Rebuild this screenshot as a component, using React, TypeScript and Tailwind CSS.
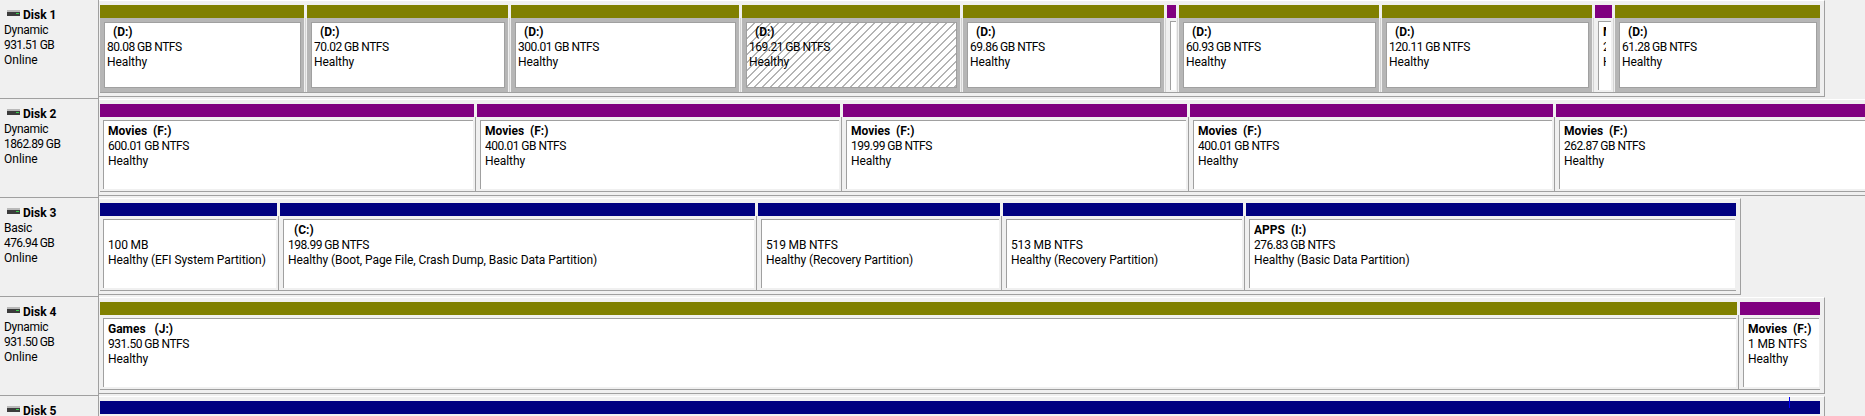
const OLIVE = "bg-[#808000]";
const PURPLE = "bg-[#800080]";
const NAVY = "bg-[#000080]";

type Part = {
  width: string;
  color: string;
  name?: string;
  size?: string;
  status?: string;
  selected?: boolean;
  hatched?: boolean;
};

type Disk = {
  title: string;
  kind?: string;
  capacity?: string;
  state?: string;
  boxWidth: string;
  parts: Part[];
};

const D = (width: string, size: string, hatched = false): Part => ({
  width,
  color: OLIVE,
  name: "  (D:)",
  size,
  status: "Healthy",
  selected: true,
  hatched,
});

const disks: Disk[] = [
  {
    title: "Disk 1",
    kind: "Dynamic",
    capacity: "931.51 GB",
    state: "Online",
    boxWidth: "w-[1726px]",
    parts: [
      D("w-[204px]", "80.08 GB NTFS"),
      D("w-[201px]", "70.02 GB NTFS"),
      D("w-[228px]", "300.01 GB NTFS"),
      D("w-[218px]", "169.21 GB NTFS", true),
      D("w-[201px]", "69.86 GB NTFS"),
      { width: "w-[9px]", color: PURPLE },
      D("w-[200px]", "60.93 GB NTFS"),
      D("w-[210px]", "120.11 GB NTFS"),
      { width: "w-[17px]", color: PURPLE, name: "Movies  (F:)", size: "2.00 GB NTFS", status: "Healthy" },
      D("w-[205px]", "61.28 GB NTFS"),
    ],
  },
  {
    title: "Disk 2",
    kind: "Dynamic",
    capacity: "1862.89 GB",
    state: "Online",
    boxWidth: "w-[1800px]",
    parts: [
      { width: "w-[374px]", color: PURPLE, name: "Movies  (F:)", size: "600.01 GB NTFS", status: "Healthy" },
      { width: "w-[363px]", color: PURPLE, name: "Movies  (F:)", size: "400.01 GB NTFS", status: "Healthy" },
      { width: "w-[344px]", color: PURPLE, name: "Movies  (F:)", size: "199.99 GB NTFS", status: "Healthy" },
      { width: "w-[363px]", color: PURPLE, name: "Movies  (F:)", size: "400.01 GB NTFS", status: "Healthy" },
      { width: "w-[360px]", color: PURPLE, name: "Movies  (F:)", size: "262.87 GB NTFS", status: "Healthy" },
    ],
  },
  {
    title: "Disk 3",
    kind: "Basic",
    capacity: "476.94 GB",
    state: "Online",
    boxWidth: "w-[1642px]",
    parts: [
      { width: "w-[177px]", color: NAVY, size: "100 MB", status: "Healthy (EFI System Partition)" },
      { width: "w-[475px]", color: NAVY, name: "  (C:)", size: "198.99 GB NTFS", status: "Healthy (Boot, Page File, Crash Dump, Basic Data Partition)" },
      { width: "w-[242px]", color: NAVY, size: "519 MB NTFS", status: "Healthy (Recovery Partition)" },
      { width: "w-[240px]", color: NAVY, size: "513 MB NTFS", status: "Healthy (Recovery Partition)" },
      { width: "w-[490px]", color: NAVY, name: "APPS  (I:)", size: "276.83 GB NTFS", status: "Healthy (Basic Data Partition)" },
    ],
  },
  {
    title: "Disk 4",
    kind: "Dynamic",
    capacity: "931.50 GB",
    state: "Online",
    boxWidth: "w-[1726px]",
    parts: [
      { width: "w-[1637px]", color: OLIVE, name: "Games   (J:)", size: "931.50 GB NTFS", status: "Healthy" },
      { width: "w-[80px]", color: PURPLE, name: "Movies  (F:)", size: "1 MB NTFS", status: "Healthy" },
    ],
  },
  {
    title: "Disk 5",
    boxWidth: "w-[1726px]",
    parts: [{ width: "w-[1720px]", color: NAVY }],
  },
];

function DiskIcon() {
  return (
    <svg width="13" height="6" viewBox="0 0 13 6" className="shrink-0 mb-[5px]">
      <rect x="0" y="0" width="13" height="2" fill="#b9b9b9" />
      <rect x="0" y="2" width="13" height="4" fill="#3c3c3c" />
      <rect x="9" y="3" width="3" height="1" fill="#35d04a" />
    </svg>
  );
}

function Label({ part }: { part: Part }) {
  return (
    <div className="overflow-hidden whitespace-pre text-[12px] leading-[15px] text-black">
      <div className="h-[15px] font-bold">{part.name}</div>
      <div className={`h-[15px] ${part.size?.includes("GB") ? "tracking-[-0.5px]" : "tracking-[-0.15px]"}`}>{part.size}</div>
      <div className="h-[15px] tracking-[-0.07px]">{part.status}</div>
    </div>
  );
}

function Partition({ part }: { part: Part }) {
  return (
    <div className={`${part.width} flex-none overflow-hidden flex flex-col`}>
      <div className={`h-[13px] flex-none ${part.color}`} />
      {part.selected ? (
        <div className="flex-1 bg-[#b6b6b6] pl-[4px] pr-[3px] py-[4px] flex">
          <div
            className={`flex-1 min-w-0 border border-[#a0a0a0] pl-[2px] pt-[2px] ${
              part.hatched
                ? "bg-[repeating-linear-gradient(135deg,#ffffff_0,#ffffff_4.8px,#b4b4b4_4.8px,#b4b4b4_5.66px)]"
                : "bg-white"
            }`}
          >
            <Label part={part} />
          </div>
        </div>
      ) : (
        <div className="flex-1 pl-[3px] pr-[1px] pt-[3px] pb-[2px] flex">
          <div className="flex-1 min-w-0 bg-white border-t border-l border-[#a0a0a0] pl-[4px] pr-[5px] pt-[3px]">
            {part.size && <Label part={part} />}
          </div>
        </div>
      )}
    </div>
  );
}

function Separator({ light }: { light: boolean }) {
  return (
    <div className="w-[3px] flex-none flex justify-center pt-[13px]">
      <div className={`w-px ${light ? "bg-[#d4d4d4]" : "bg-[#a0a0a0]"}`} />
    </div>
  );
}

function DiskRow({ disk, index }: { disk: Disk; index: number }) {
  return (
    <div className="flex h-[99px] overflow-hidden">
      <div className="w-[99px] flex-none h-[99px] border-r border-b border-[#a0a0a0] pl-[4px] pt-[8px] text-[12px] leading-[15px] text-black">
        <div className="flex items-center h-[15px] ml-[3px] gap-[3px]">
          <DiskIcon />
          <span className="font-bold">{disk.title}</span>
        </div>
        <div className="tracking-[-0.3px]">{disk.kind}</div>
        <div className="tracking-[-0.6px]">{disk.capacity}</div>
        <div>{disk.state}</div>
      </div>
      <div className={`relative ${disk.boxWidth} flex-none h-[97px] border-t border-t-white border-r border-b border-r-[#a0a0a0] border-b-[#a0a0a0] pl-px pr-[4px] pt-[4px]`}>
        <div className={`flex h-[88px] ${disk.parts.length > 1 ? "" : "w-[1720px]"} border-b border-[#a0a0a0]`}>
          {disk.parts.map((part, i) => (
            <div key={i} className="contents">
              {i > 0 && <Separator light={index === 0} />}
              <Partition part={part} />
            </div>
          ))}
        </div>
        {index === 4 && (
          <div className="absolute left-[1690px] top-0 h-[11px] w-px bg-[#0000ff]" />
        )}
      </div>
    </div>
  );
}

export default function App() {
  return (
    <div className="w-[1865px] h-[416px] overflow-hidden bg-[#f0f0f0] font-['Roboto',sans-serif]">
      {disks.map((disk, i) => (
        <DiskRow key={disk.title} disk={disk} index={i} />
      ))}
    </div>
  );
}
